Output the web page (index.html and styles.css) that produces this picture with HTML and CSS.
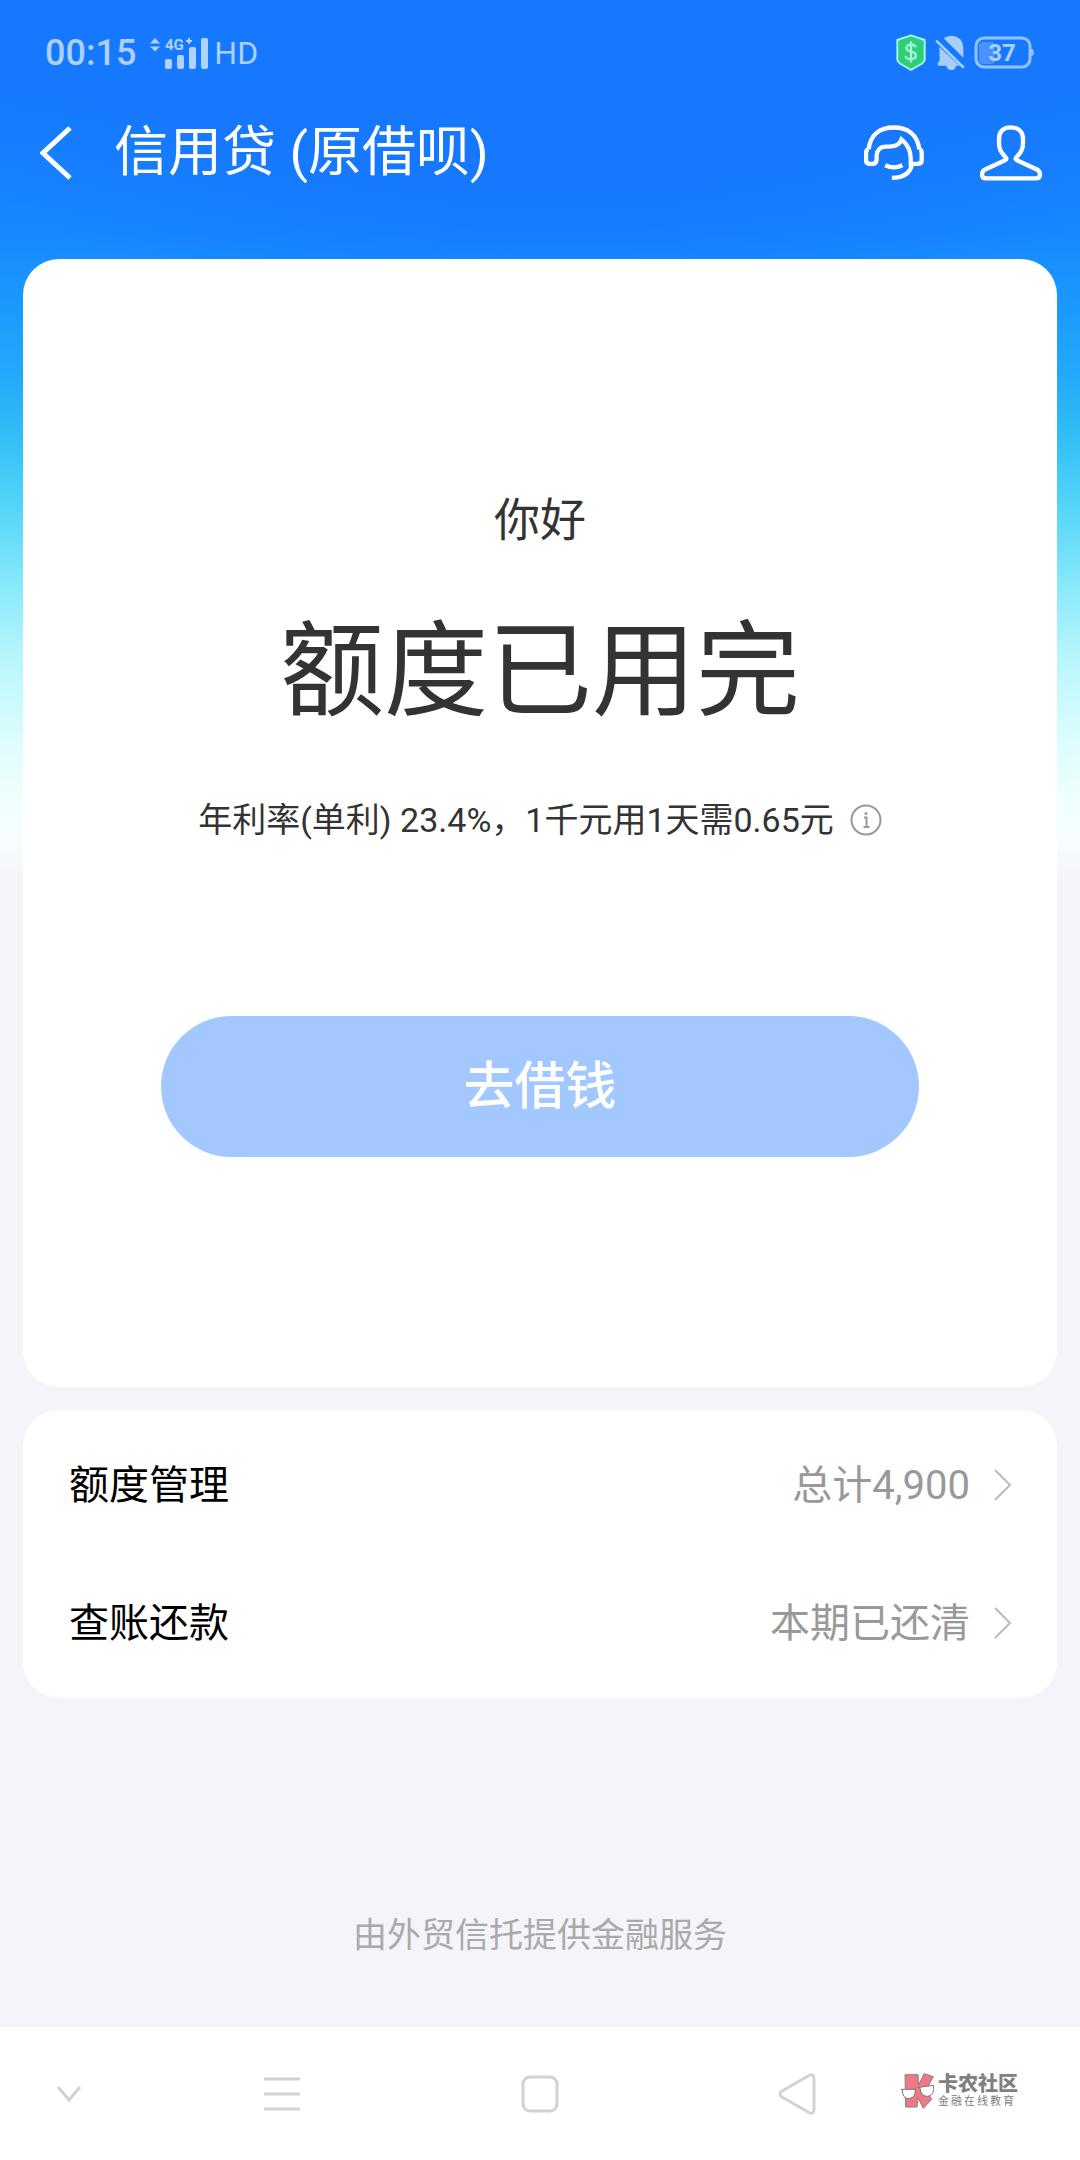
FILE: index.html
```html
<!DOCTYPE html>
<html lang="zh-CN">
<head>
<meta charset="utf-8">
<meta name="viewport" content="width=device-width, initial-scale=1">
<title>信用贷 (原借呗)</title>
<link rel="stylesheet" href="styles.css">
</head>
<body>
<div class="screen">
  <div class="status">
    <div class="status-group">
      <span class="clock">00:15</span>
      <svg class="signal" width="60" height="34" viewBox="0 0 60 34" aria-hidden="true">
        <path d="M0 7.500 5 2l5 5.500zM0 10.500h10L5 15.500z"/>
        <text x="15" y="14" class="network">4G</text>
        <path d="M39 2v6M36 5h6" class="plus"/>
        <rect x="15" y="23" width="7" height="10" rx="2"/>
        <rect x="27" y="19" width="7" height="14" rx="2"/>
        <rect x="39" y="11" width="7" height="22" rx="2"/>
        <rect x="51" y="2" width="7" height="31" rx="2"/>
      </svg>
      <span class="hd">HD</span>
    </div>
    <div class="status-group status-right">
      <svg width="30" height="38" viewBox="161 100 92 114" aria-hidden="true">
        <path d="M207 103 249 117V178Q247 184 240 190L207 209 174 190Q167 184 165 178V117Z" fill="#2fcf7a" stroke="#a9f3dd" stroke-width="6" stroke-linejoin="round"/>
        <path d="M222 139Q219 131 207 131 193 131 193 142 193 150 207 153 222 156 222 165 222 176 207 176 193 176 190 167M207 122V186" fill="none" stroke="#a9f3dd" stroke-width="7"/>
      </svg>
      <svg class="bell" width="30" height="36" viewBox="287 102 90 108" aria-hidden="true">
        <path d="M313 112Q322 104 337 104 372 108 372 142V170ZM300 138 361 194H350Q348 207 336 207 324 207 321 194H297Q292 188 298 183 301 181 301 174Z"/>
        <path d="M293 121 371 198" fill="none" stroke="#a9cdff" stroke-width="8" stroke-linecap="round"/>
      </svg>
      <svg class="battery" width="60" height="34" viewBox="0 0 60 34" aria-hidden="true">
        <rect x="5" y="6" width="16" height="22" rx="4" fill="#4a92ff"/>
        <rect x="2" y="2" width="54" height="29" rx="8" fill="none" stroke="#94c1ff" stroke-width="3"/>
        <path d="M57 13q3 0 3 3.500t-3 3.500z" fill="#94c1ff"/>
        <text x="28" y="25" text-anchor="middle" class="charge">37</text>
      </svg>
    </div>
  </div>

  <header class="bar">
    <button class="icon-button" aria-label="返回">
      <svg width="32" height="56" viewBox="0 0 32 56"><path d="M30 3 3 28 30 53"/></svg>
    </button>
    <h1 class="title">信用贷 (原借呗)</h1>
    <button class="icon-button" aria-label="客服">
      <svg width="60" height="56" viewBox="72 374 181 168" class="line-icon">
        <path d="M86 447C91 402 120 381 162 381 204 381 233 402 239 447M86 447Q78 448 78 458V480Q78 491 90 491H97Q109 491 110 478V466Q112 440 137 439L155 438Q178 436 185 417 213 440 213 474V491H234Q246 491 246 480V458Q246 448 239 447M217 491C212 519 190 533 156 533M136 495Q162 508 188 495"/>
      </svg>
    </button>
    <button class="icon-button" aria-label="我的">
      <svg width="62" height="56" viewBox="420 374 186 168" class="line-icon">
        <path d="M512 381C532 381 549 392 549 416V427C549 450 541 458 529 471Q523 476 534 481L589 507Q600 512 600 522 600 534 589 534H437Q426 534 426 522 426 512 437 507L492 481Q503 476 497 471C485 458 477 450 477 427V416C477 392 492 381 512 381Z"/>
      </svg>
    </button>
  </header>

  <main class="content">
    <section class="card quota">
      <p class="hello">你好</p>
      <h2 class="headline">额度已用完</h2>
      <p class="rate">
        <span>年利率(单利) 23.4%，1千元用1天需0.65元</span>
        <button class="info" aria-label="利率说明">
          <svg width="32" height="32" viewBox="0 0 32 32"><circle cx="16" cy="16" r="14.500"/><path d="M14 13.500h2.500v9M13.500 23h6"/><circle cx="16" cy="9.500" r="1.500" class="dot"/></svg>
        </button>
      </p>
      <button class="borrow">去借钱</button>
    </section>

    <nav class="card links">
      <a class="row" href="#quota">
        <span class="label">额度管理</span>
        <span class="value">总计4,900</span>
        <svg width="18" height="32" viewBox="0 0 18 32"><path d="M1 1 16 16 1 31"/></svg>
      </a>
      <a class="row" href="#bills">
        <span class="label">查账还款</span>
        <span class="value">本期已还清</span>
        <svg width="18" height="32" viewBox="0 0 18 32"><path d="M1 1 16 16 1 31"/></svg>
      </a>
    </nav>

    <p class="provider">由外贸信托提供金融服务</p>
  </main>

  <footer class="system">
    <button class="key" aria-label="收起"><svg width="26" height="18" viewBox="0 0 26 18"><path d="M2 2 13 15 24 2"/></svg></button>
    <button class="key" aria-label="菜单"><svg width="36" height="36" viewBox="0 0 36 36"><path d="M0 3h36M0 18h36M0 33h36"/></svg></button>
    <button class="key" aria-label="主页"><svg width="38" height="38" viewBox="0 0 38 38"><rect x="2" y="2" width="34" height="34" rx="7"/></svg></button>
    <button class="key" aria-label="后退"><svg width="38" height="42" viewBox="0 0 38 42"><path d="M31 2.500Q36 0 36 6V36Q36 42 31 39.500L4 24Q0 21 4 18Z"/></svg></button>
    <div class="brand">
      <svg width="34" height="36" viewBox="120 158 102 106" aria-hidden="true">
        <path d="M135 162H174L176 193 192 159 220 168 199 207 215 236 190 263 174 232 171 259H137Z" fill="#f07884" stroke="#858080" stroke-width="3" stroke-linejoin="round"/>
        <path d="M123 206H165Q169 230 147 234 127 234 127 209ZM178 200 221 194V207Q219 225 202 227 183 227 180 203ZM165 206Q172 198 178 200" fill="#fff" stroke="#777" stroke-width="3"/>
      </svg>
      <div class="brand-text">
        <span class="brand-name">卡农社区</span>
        <span class="brand-tag">金融在线教育</span>
      </div>
    </div>
  </footer>
</div>
</body>
</html>
```
FILE: styles.css
```css
* {
  box-sizing: border-box;
}

body {
  margin: 0;
  font-family: Roboto, "Noto Sans CJK SC", sans-serif;
  color: #333;
}

h1, h2, p {
  margin: 0;
  font-weight: 400;
}

button {
  padding: 0;
  border: 0;
  background: none;
  font-family: inherit;
  color: inherit;
}

svg {
  display: block;
}

.screen {
  display: flex;
  flex-direction: column;
  min-height: 100vh;
  background:
    radial-gradient(ellipse 64% 340px at 52% 0, #1677ff 50%, rgba(22, 119, 255, 0) 100%) no-repeat,
    linear-gradient(#1677ff 0, #1677ff 60px, #1788ff 230px, #1a98fe 300px, #22a8fb 370px, #2fbcf6 430px, #50d3f8 500px, #8beafa 590px, #b9f6fc 660px, #dcfdfe 740px, #effffe 800px, #f6fdff 840px, #f4f4fa 880px, #f4f4fa 100%);
}

/* Status bar */
.status {
  display: flex;
  justify-content: space-between;
  align-items: center;
  height: 106px;
  padding: 0 46px 0 45px;
  color: #acd0ff;
}

.status-group {
  display: flex;
  align-items: center;
}

.clock {
  font-size: 36px;
  font-weight: 500;
}

.signal {
  margin: 0 4px 0 14px;
  fill: #b0d2ff;
}

.network {
  font-size: 15px;
  font-weight: 700;
}

.plus {
  stroke: #b0d2ff;
  stroke-width: 2;
}

.hd {
  font-size: 32px;
}

.status-right {
  gap: 9px;
}

.bell {
  fill: #a9cdff;
}

.charge {
  font-size: 24px;
  font-weight: 700;
  fill: #acd0ff;
}

/* Title bar */
.bar {
  display: flex;
  align-items: center;
  gap: 56px;
  height: 94px;
  padding: 0 38px 0 40px;
  color: #fff;
}

.icon-button svg {
  fill: none;
  stroke: #fff;
  stroke-width: 5;
}

.icon-button .line-icon {
  stroke-width: 13;
}

.title {
  flex: 1;
  margin-left: -14px;
  padding-bottom: 12px;
  font-size: 54px;
}

/* Cards */
.content {
  flex: 1;
  display: flex;
  flex-direction: column;
  gap: 23px;
  padding: 59px 23px 0;
}

.card {
  border-radius: 36px;
  background: #fff;
}

.quota {
  display: flex;
  flex-direction: column;
  align-items: center;
  padding: 229px 138px 230px;
}

.hello {
  font-size: 46px;
  line-height: 64px;
}

.headline {
  margin-top: 48px;
  font-size: 104px;
  line-height: 146px;
}

.rate {
  display: flex;
  align-items: center;
  gap: 16px;
  margin-top: 50px;
  font-size: 34px;
  line-height: 48px;
  white-space: nowrap;
}

.info svg {
  fill: none;
  stroke: #999;
  stroke-width: 2;
}

.info .dot {
  fill: #999;
  stroke: none;
}

.borrow {
  width: 100%;
  margin-top: 172px;
  padding: 34px 0;
  border-radius: 71px;
  background: #a2c8ff;
  color: #fff;
  font-size: 51px;
  font-weight: 500;
  line-height: 73px;
}

.links {
  padding: 6px 0;
}

.row {
  display: flex;
  align-items: center;
  height: 138px;
  padding: 0 45px 0 46px;
  font-size: 40px;
  color: #000;
  text-decoration: none;
}

.label,
.value {
  padding-bottom: 6px;
}

.value {
  margin: 0 24px 0 auto;
  color: #999;
}

.row svg {
  fill: none;
  stroke: #bbb;
  stroke-width: 2;
}

.provider {
  margin: 190px 0 67px;
  font-size: 34px;
  line-height: 48px;
  text-align: center;
  color: #aaa;
}

/* System navigation */
.system {
  position: relative;
  display: grid;
  grid-template-columns: 138fr 287fr 230fr 283fr 142fr;
  align-items: center;
  justify-items: center;
  height: 133px;
  background: #fff;
}

.key svg {
  fill: none;
  stroke: #d2d2d2;
  stroke-width: 3;
}

.brand {
  position: absolute;
  top: 46px;
  right: 62px;
  display: flex;
  align-items: center;
  gap: 4px;
  color: #808080;
}

.brand-text {
  display: flex;
  flex-direction: column;
}

.brand-name {
  font-size: 20px;
  font-weight: 900;
  line-height: 22px;
}

.brand-tag {
  font-size: 11px;
  letter-spacing: 2px;
  line-height: 14px;
}
```
